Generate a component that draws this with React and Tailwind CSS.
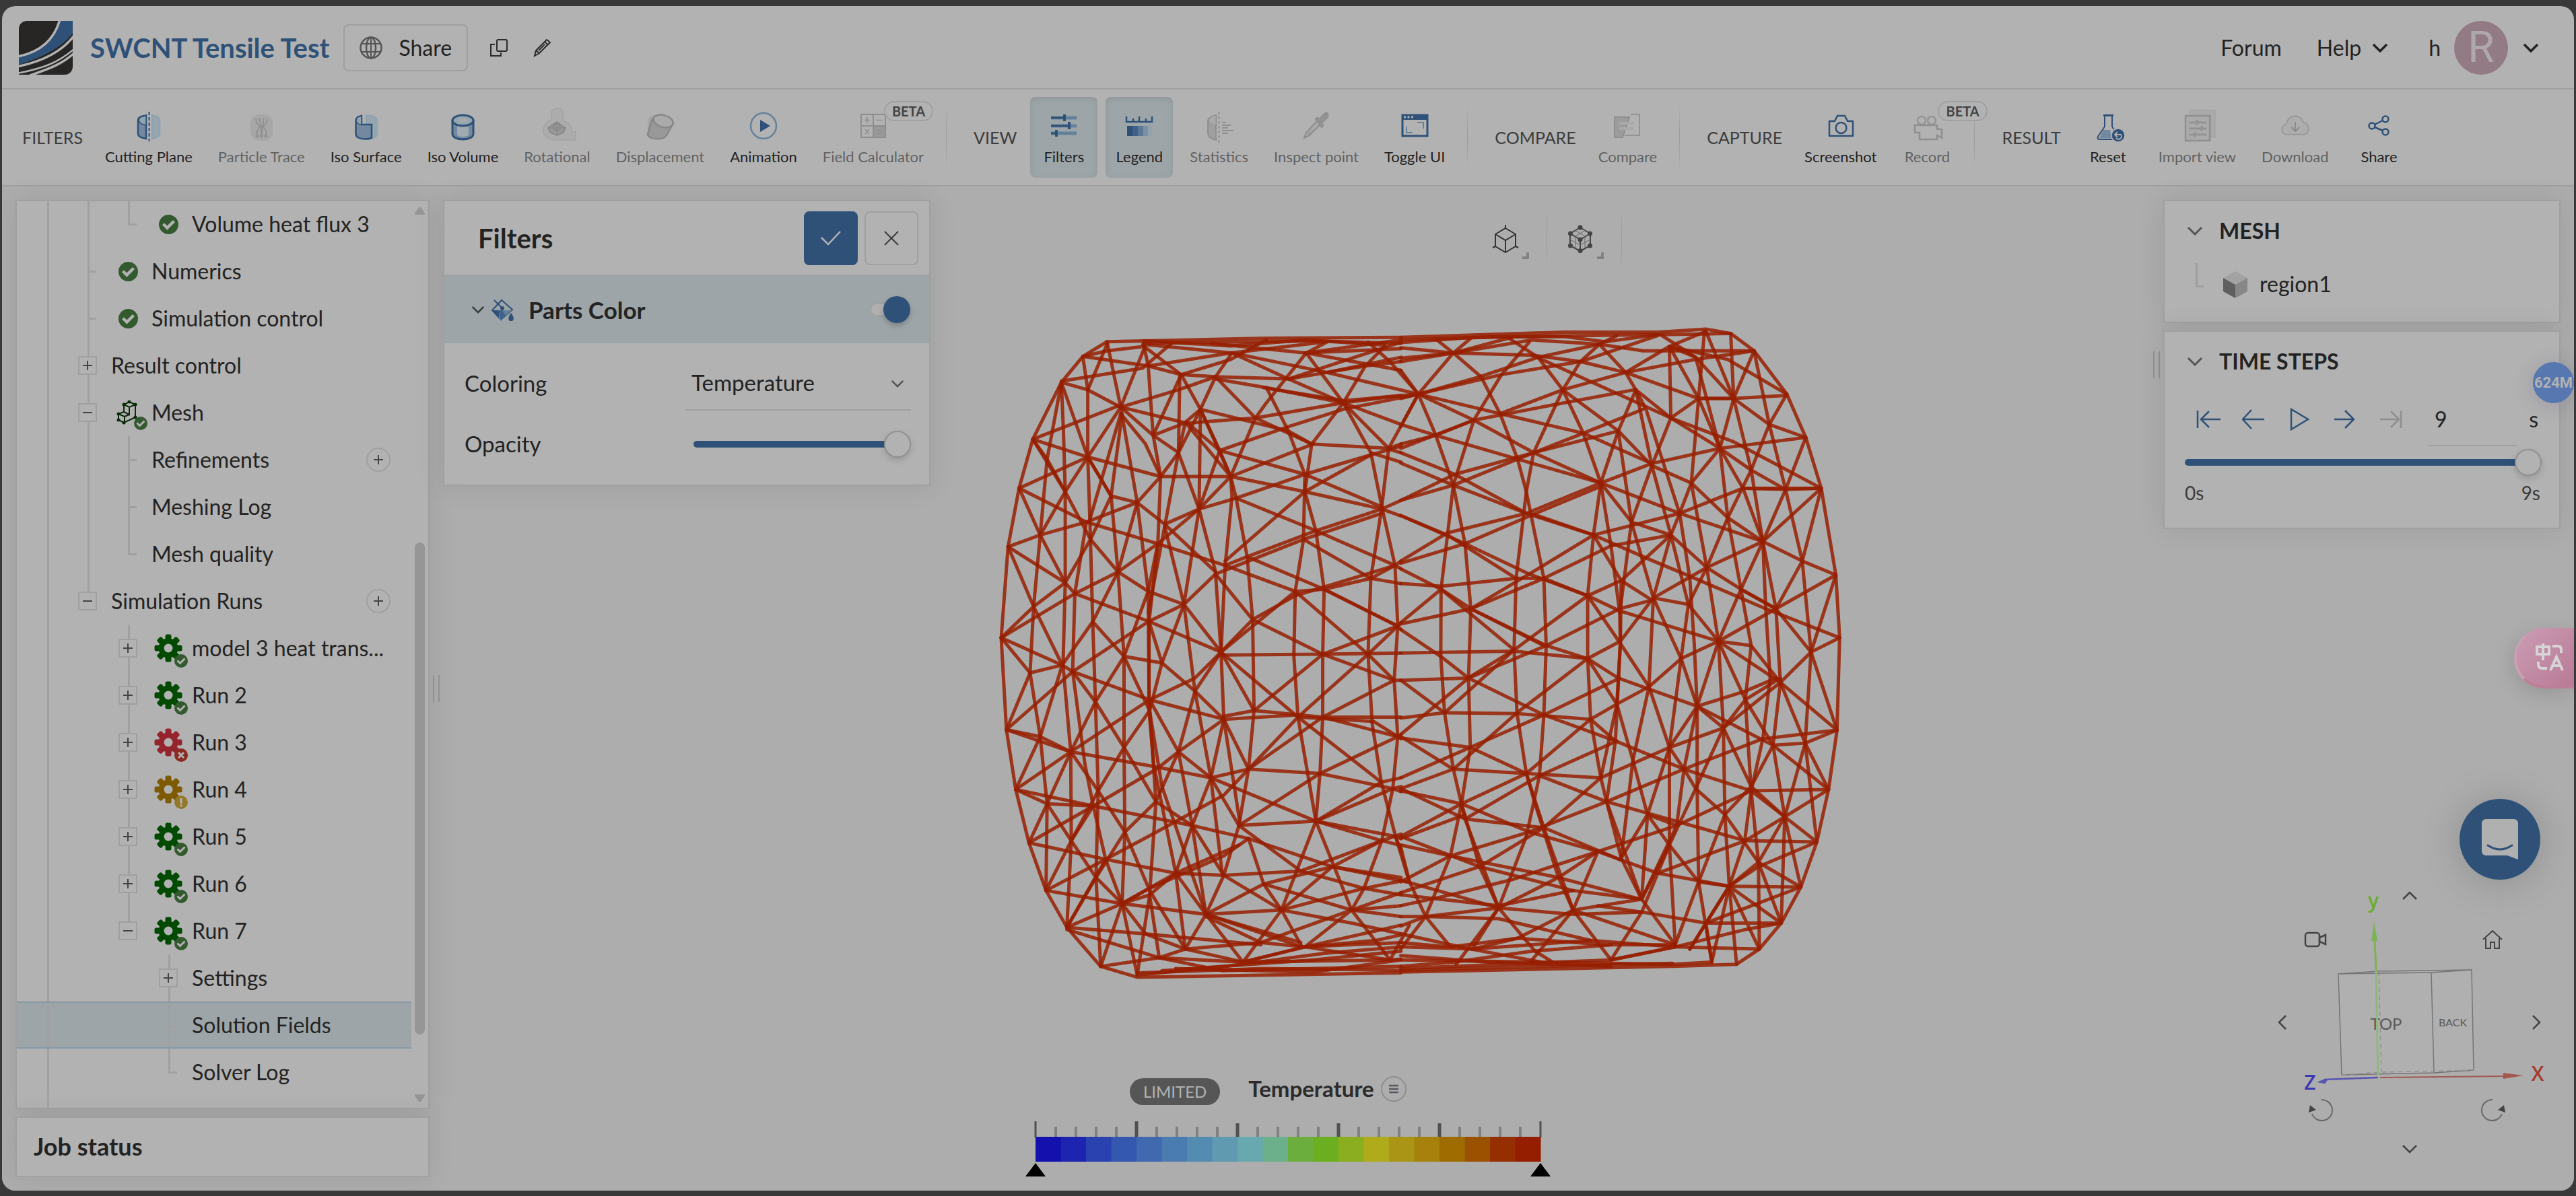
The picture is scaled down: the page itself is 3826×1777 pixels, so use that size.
import React from "react";

/* ---------- Result mesh ---------- */

const MESH_LEFT = [
  "1520,64 1030,66 585,72 450,74 362,108 284,168 180,299 130,412 90,547 65,757 84,969 118,1107 166,1230 228,1340 304,1425 427,1515 560,1540 1520,1530",
  "284,168 292,290 298,420 298,630 290,820 318,1020 320,1225 304,1425",
  "284,168 232,345 207,520 183,685 170,838 207,985 232,1140 228,1340",
  "362,108 380,185 380,340 388,490 398,720 408,905 418,1110 410,1310 427,1515",
  "450,74 500,225 560,445 600,650 603,900 628,1135 605,1350 560,1535",
  "505,240 465,430 490,605 512,800 512,1010 515,1205 505,1370 427,1515",
  "500,240 385,490", "450,80 380,185",
  "585,85 600,130 618,290 645,385 635,540 603,720 603,925 620,1050 700,1300 735,1475",
  "375,490 333,655 325,835 370,1050 400,1145 445,1268 505,1370 560,1535",
  "715,150 710,330 660,500 600,700", "660,500 730,680",
  "790,230 785,460 730,680 770,880 828,1080 870,1305",
  "900,385 905,430 880,590 865,790 875,945 912,1095 935,1190",
  "860,325 900,385 920,435 960,570 980,715 985,925 965,1060 930,1190 875,1305 810,1395 735,1475",
  "845,610 865,790", "710,330 785,460 845,605",
  "1030,180 1110,280 1170,380 1165,530 1135,650 1130,800 1145,940 1210,1180 1340,1385",
  "1195,310 1170,420 1210,510 1240,645 1235,795 1235,940 1225,1070 1210,1180 1085,1385 945,1505",
  "1310,215 1410,330 1450,455 1498,590 1508,730 1495,855 1508,985 1490,1105 1450,1225 1385,1335 1340,1385",
  "1583,195 1475,320 1450,455 1410,620 1400,795 1415,955 1448,1090 1500,1215 1550,1320",
  "362,108 450,95 585,85", "362,108 600,130 720,150 845,155 1110,160 1250,145 1390,130 1520,120",
  "284,165 580,135 690,75", "585,85 720,150 790,230 860,325", "600,130 900,100 1240,75",
  "585,90 500,225 380,340 298,420 207,520", "284,168 380,185 500,225 618,290 740,260 860,325",
  "500,225 710,185 845,155 990,250 1195,310 1475,320 1520,310", "500,225 740,262 990,250 1310,215",
  "720,150 900,115 1030,70", "905,100 845,155 790,230 710,330 645,385 560,445 375,490 207,520 90,547",
  "905,100 1110,160 1310,215", "580,80 905,100 1250,145 1520,110", "830,78 1175,100 1520,140",
  "1250,75 1175,100 1030,215 990,250 900,385", "1175,100 1310,215 1195,310", "1170,100 1520,70", "1170,100 1520,90",
  "1460,85 1390,130 1310,215 1475,320", "1020,180 1310,210 1583,195", "1110,160 1520,75", "1400,75 1480,120 1583,195",
  "1250,145 1583,195", "845,160 1030,180 1310,215 1520,198", "1583,195 1310,230 1110,270 860,325",
  "1310,215 1520,265", "1410,330 1520,352", "1475,322 1520,330", "585,78 1200,72 1520,78", "585,72 900,84 1175,70 1460,82",
  "1498,590 1520,598", "1508,730 1520,738", "1508,985 1520,990", "1490,1105 1520,1112", "1450,1225 1520,1236", "1500,1215 1520,1250",
  "1270,1285 1540,1320", "1340,1385 1520,1375", "1170,1470 1430,1455 1520,1442", "1170,1470 1520,1460", "1480,1500 1520,1498", "560,1530 1020,1520 1520,1524", "700,1520 1200,1528 1520,1500",
  "790,230 1110,280 1195,310", "860,325 1170,380 1450,455", "900,385 1200,310", "645,385 900,385",
  "900,385 1170,420 1450,460 1520,476", "785,460 920,435 1170,380 1410,335 1520,315", "920,435 1210,510 1498,590",
  "880,590 960,570 1210,510 1450,460 1520,440", "880,580 1170,420 1410,335", "960,570 1240,645 1508,730",
  "845,610 1165,530 1450,470", "880,590 1135,650 1240,645 1410,620 1498,590 1520,580", "1165,530 1410,620 1520,632",
  "865,790 980,715 1135,660 1240,640 1498,590", "865,790 1135,650 1400,795 1495,855",
  "845,610 980,715 1235,795 1495,855 1520,855", "865,797 1235,795 1520,792", "1235,795 1508,730 1240,645",
  "985,925 1235,795", "1520,722 1508,730 1400,795 1145,940 965,1060", "865,790 985,925", "865,790 1145,940 1448,1090",
  "875,945 1145,935", "875,938 985,925 1235,940 1520,940", "1235,940 1495,855", "1145,940 1420,950 1508,985",
  "1235,940 1508,985 1520,980", "965,1060 1235,940", "965,1060 1225,1070 1490,1105", "1225,1070 1508,985",
  "828,1080 965,1060", "828,1080 1210,1180", "710,1020 828,1080 930,1190 1210,1180 1450,1225",
  "930,1190 1225,1070", "1210,1180 1448,1090 1520,1080", "1210,1180 1490,1105 1520,1100",
  "930,1190 1155,1295 1385,1335 1520,1350", "965,1220 1270,1285 1520,1310", "875,1305 1155,1295 1450,1225 1520,1210",
  "875,1305 1085,1385 1270,1285", "1210,1180 1500,1215 1520,1220", "810,1395 1020,1325 1270,1285 1450,1225",
  "810,1395 1085,1385 1385,1335 1520,1318", "965,1220 1020,1325 1085,1385 1160,1470", "1340,1385 1520,1345",
  "1020,1325 1340,1385 1520,1400", "1085,1385 1340,1415 1520,1440", "810,1400 1010,1460 1170,1470 1520,1420",
  "810,1395 1160,1470", "810,1395 945,1505", "735,1475 1010,1460 1340,1385 1170,1470 945,1505",
  "1340,1385 1480,1500 1550,1420", "735,1475 945,1505 1170,1470 1480,1500", "640,1495 870,1525 1520,1515",
  "560,1535 880,1515 1240,1485 1520,1470", "650,1525 1200,1500 1520,1480", "427,1515 640,1495 735,1475",
  "590,1440 735,1475", "304,1425 590,1440 1010,1465", "304,1430 640,1495 945,1505 1480,1500", "605,1350 640,1495",
  "304,1425 505,1370 605,1335 875,1260 965,1220", "228,1340 505,1370 810,1395 1155,1460", "166,1230 445,1268 700,1300 875,1305",
  "118,1107 400,1145 760,1190 965,1220", "84,969 318,1020 630,1055 828,1080", "325,835 605,900 875,945",
  "333,655 605,720 865,790", "375,490 635,540 880,590", "130,412 375,490", "180,299 380,340 645,385",
  "180,299 500,220", "130,412 380,340", "180,299 298,420 390,530", "284,168 380,340 465,430", "130,412 207,520 298,630 333,655",
  "90,547 298,630", "90,547 183,685 287,820 325,835", "65,757 183,685 298,630 390,530 465,430", "65,757 287,820",
  "65,757 170,838 287,820", "84,969 170,838", "84,969 207,985 318,1020", "118,1107 207,985 287,820", "118,1107 232,1140 400,1145",
  "166,1230 232,1140 318,1020", "228,1340 320,1225 400,1145", "232,1140 320,1225 410,1310 505,1370 590,1440",
  "304,1425 410,1310", "228,1340 445,1268 630,1205 875,1120 965,1060", "505,1370 700,1300 930,1235",
  "166,1230 400,1145 630,1060 710,1020 875,945", "118,1107 318,1020 605,900 770,850 865,790", "84,969 325,835 600,720 730,680 845,610",
  "65,757 333,655 490,605 635,540 785,460", "287,820 398,720 490,605 560,445", "318,1020 408,905 512,800 600,650 635,540",
  "325,835 408,905 512,1010 628,1135 760,1190 875,1305", "318,1020 418,1110 515,1205 605,1340 735,1475", "320,1225 418,1110 512,1010 605,925 650,815 730,680",
  "410,1310 515,1205 628,1135 710,1020 770,880 865,790", "304,1425 445,1268", "505,1370 605,1350 700,1300 760,1190 828,1080 875,945 965,1060",
  "605,900 710,1020 760,1190 810,1395 700,1300", "603,720 650,815 770,880 875,945", "398,720 512,800 650,815",
  "390,530 490,605 600,650 730,680 865,790", "380,340 465,430 560,445 660,495 845,605", "512,800 605,925 650,1100 810,1395",
  "618,290 710,330 735,260 790,230 900,385", "500,240 590,310 645,385", "720,150 618,290", "860,325 785,460 660,495", "900,385 785,460",
  "180,299 232,345 298,420", "735,260 900,385",
];

const MESH_RIGHT = [
  "0,64 560,52 880,52 1045,45 1130,55 1210,95 1322,195 1387,295 1440,412 1490,612 1503,757 1494,970 1465,1107 1425,1228 1370,1332 1303,1415 1228,1475 1150,1510 930,1515 0,1528",
  "0,70 380,62 880,58 1130,55", "0,76 250,64 560,62 700,74 880,58", "0,88 180,100 450,105 615,120 770,145", "0,120 180,100 450,70 680,80 830,95 1210,95",
  "0,112 180,100 380,64", "0,140 60,195 180,100 240,66", "0,205 60,195 270,155 470,110 680,80", "60,195 345,150 615,120 880,60",
  "60,195 340,240 555,185 770,145 1010,115 1210,95", "120,68 180,100 275,155 340,240 400,345 430,420 490,620 498,775 490,935 475,1075 430,1215",
  "440,75 345,150 250,255 180,405 160,520 138,645 137,800 150,930 180,1060 220,1175 335,1380",
  "370,66 470,110 555,185 625,285 685,400 660,520 640,660 640,800 650,945 685,1080 705,1135 755,1265 825,1360",
  "685,400 720,545 750,700 752,770 740,910 685,1080", "740,60 680,80 615,120 555,185 455,330 430,420 395,620 388,785 398,930 430,1070 490,1195 590,1385",
  "0,270 60,195 120,290 180,405 220,540 240,690 232,850 238,1010 208,1140 170,1260 85,1400", "430,1215 335,1380 245,1475",
  "0,265 120,290 400,345 685,400", "0,310 120,290 250,255 520,220 800,185", "0,320 250,255", "60,195 250,255 455,330 685,400",
  "0,330 185,380 430,470", "0,354 180,405 430,470 660,520", "0,440 185,380 455,330 745,280", "0,440 180,405 400,345 625,285 830,230",
  "0,475 160,520 395,620", "0,475 220,540 440,610 640,660", "0,580 160,515 430,470 685,400", "0,585 220,540 455,472 685,408",
  "0,598 138,645 240,690 490,775", "0,632 138,638 395,620 490,620 640,660", "240,690 440,610 660,520 455,472",
  "490,620 720,545 925,520", "0,722 138,645 388,785 640,660", "0,725 240,690 490,620", "0,738 137,800 232,850 490,935",
  "0,792 388,788 640,805", "0,855 230,850 388,785", "0,855 150,930", "240,690 498,775 640,805", "0,942 150,930 388,785", "0,980 232,850 498,775 750,690 860,670",
  "150,930 398,932 650,945", "0,988 238,1010 430,1070 685,1080", "0,985 180,1060 430,1070", "0,1080 238,1010 490,935 750,850",
  "0,1105 180,1060 398,930 640,805", "0,1110 208,1140 440,1205 675,1250", "0,1105 220,1175 490,1195 755,1270",
  "208,1140 430,1070 650,945", "220,1175 475,1075 740,995", "490,935 735,995", "475,1075 705,1135", "490,1195 685,1080",
  "440,1205 705,1135 970,1060 1240,990 1494,970", "0,1215 208,1140", "0,1220 220,1165", "0,1235 170,1260 540,1310 820,1360",
  "0,1215 270,1285 590,1340 825,1360", "0,1240 30,1320 85,1400 170,1470", "0,1320 170,1260 440,1205", "0,1345 270,1285 490,1195",
  "0,1375 170,1350 380,1315 675,1250", "0,1316 335,1380 590,1395 820,1390", "0,1350 335,1375 590,1340", "208,1140 270,1285 335,1380",
  "430,1070 460,1140 540,1310 590,1385", "245,1475 400,1450 590,1385", "0,1400 85,1400 335,1405 650,1455 940,1470",
  "0,1422 85,1400 335,1380 540,1310 675,1250", "0,1475 85,1400", "0,1440 240,1475 480,1505", "0,1460 170,1470 400,1450 700,1465 940,1465",
  "0,1515 180,1505 450,1480 720,1465", "0,1520 720,1500 940,1470", "450,1500 590,1385 825,1360", "590,1385 720,1500",
  "590,1385 940,1465", "335,1380 460,1480 520,1505", "335,1380 190,1510", "720,1500 825,1390 675,1375", "0,1500 480,1505 930,1510 1065,1505",
  "0,1490 300,1505 720,1515", "0,1524 400,1516 930,1508", "0,1470 245,1475 650,1455", "675,1250 590,1385",
  "920,85 925,250 860,360 790,490 750,700", "920,85 1020,205 1093,320 1172,412 1240,535", "805,185 925,250 1093,320",
  "805,185 860,360 925,520 985,680 1088,765", "805,185 840,230 955,470 990,620 1005,770 1015,915", "745,280 790,490 865,665 960,805 1015,915",
  "745,280 860,360 995,400 1120,480 1240,535", "685,400 745,280 805,185", "685,400 860,355 1093,320 1387,295", "685,400 955,470 1240,535",
  "685,400 790,490 925,520 1048,595 1165,645 1285,690", "660,520 955,470 1172,412 1440,412", "660,520 755,625 860,670",
  "660,520 865,580 990,615 1250,690 1503,757", "640,660 755,625 925,520", "640,660 750,695 1088,765 1300,860",
  "640,660 752,770 850,870 920,1010", "640,805 752,765 865,665 1048,595 1240,535 1440,412",
  "865,665 985,680 1048,595 1120,480 1200,370 1262,265 1322,195", "865,665 925,520 955,470 995,400 1020,205 1040,50",
  "640,805 745,850 1015,915 1275,1005", "640,805 740,910 795,1040 845,1165 945,1190", "740,910 850,870 960,805 1088,765 1285,690 1490,612",
  "865,665 850,870 795,1040 755,1265", "755,625 752,770 735,995 705,1135", "650,945 740,910", "650,945 735,995 970,1060 1200,1110",
  "685,1080 920,1010 1105,965 1300,860 1405,790 1503,757", "755,1265 845,1165 920,1010 960,805 985,680",
  "675,1250 945,1190 1200,1110 1465,1107", "675,1250 880,1300 1125,1330 1370,1332", "825,1360 920,1235 1010,1105 1105,965 1180,900 1300,850",
  "825,1360 945,1190 970,1060 1015,915 1088,765 1165,645 1240,535 1318,415 1387,295", "705,1135 825,1360 940,1465",
  "825,1360 845,1165 920,1235 1020,1320", "825,1390 920,1235", "705,1135 1180,1225 1425,1228",
  "940,1465 1020,1320 1110,1165 1200,1100 1275,1005", "940,1465 920,1235 920,1010 1015,915", "1015,915 1015,1105 1020,1320 1065,1505",
  "920,1010 970,1060 1010,1105 1110,1165 1225,1275 1303,1415", "1088,765 1105,965 1110,1165 1125,1330 1150,1510",
  "1088,765 1180,900 1275,1005 1465,1107", "1015,915 1105,965 1200,1100 1315,1170 1370,1332", "995,400 1048,595 1088,765",
  "1093,320 1120,480 1165,645 1200,775 1180,900 1200,1110 1225,1275 1228,1475", "1088,765 1200,775 1300,860 1494,970",
  "1240,535 1250,690 1265,850 1240,990 1200,1110 1178,1225 1125,1330", "1240,535 1285,690 1300,860 1275,1005 1315,1170 1303,1415",
  "1285,690 1405,790 1494,970", "1285,690 1375,580 1440,412", "1240,535 1375,580 1490,612", "1015,915 1180,880 1285,850",
  "1210,95 1262,265 1318,415 1375,580 1405,790 1385,1000 1425,1228", "1300,860 1385,1000 1465,1107", "1275,1005 1385,1000 1494,970",
  "1385,1000 1315,1170 1225,1275 1125,1330 1045,1415", "1465,1107 1315,1170 1180,1225 880,1300", "1425,1228 1225,1285 1125,1330",
  "1425,1228 1315,1170 1200,1110", "1370,1332 1225,1275", "1370,1332 1045,1415 990,1475", "1228,1475 1125,1330 1303,1415 1045,1415 830,1390",
  "1303,1415 1180,1430 940,1470", "1228,1475 940,1470", "1065,1505 1125,1330 990,1475", "1020,1320 1125,1330",
  "1130,55 1140,205 1200,370 1240,535", "1045,50 1140,205 1210,95", "1020,205 1140,205 1322,198", "1140,205 1262,265 1387,295",
  "925,250 1020,205 1140,205", "920,85 1120,115 1322,195", "925,250 1140,305 1440,412", "1172,412 1318,415 1440,412",
  "1093,320 1200,370 1318,415", "1140,205 1093,320 995,400", "680,80 770,145 1020,205", "770,145 805,185", "555,185 745,280",
  "340,240 625,285 860,355", "920,85 1045,50", "770,145 920,85 1010,110 1140,205", "1165,645 1285,690", "1490,612 1405,790",
  "450,105 925,250", "940,1470 720,1500", "1045,1415 1065,1505", "890,58 1010,110 1093,320",
];

function Mesh() {
  return (
    <svg viewBox="0 0 3819 1492" className="absolute inset-0 h-full w-full" aria-label="Result mesh" role="img">
      <g fill="none" stroke="#971f00" strokeWidth="5" strokeOpacity="0.85" strokeLinejoin="round" strokeLinecap="round">
        <g transform="translate(1457 183) scale(0.40816 0.64413)">
          {MESH_LEFT.map((p, i) => (
            <polyline key={i} points={p} vectorEffect="non-scaling-stroke" />
          ))}
        </g>
        <g transform="translate(2077 183) scale(0.43367 0.64413)">
          {MESH_RIGHT.map((p, i) => (
            <polyline key={i} points={p} vectorEffect="non-scaling-stroke" />
          ))}
        </g>
      </g>
    </svg>
  );
}

/* ---------- Icons ---------- */

const B = "#2f5178";
const M = "#64819b";
const L = "#92a4ae";

function Icon({ children, size = "size-12", box = "0 0 48 48" }) {
  return (
    <svg viewBox={box} className={`${size} shrink-0 overflow-visible`} fill="none" aria-hidden="true">
      {children}
    </svg>
  );
}

function Chevron({ className = "", w = 2 }) {
  return (
    <svg viewBox="0 0 24 14" className={`shrink-0 ${className}`} fill="none" stroke="currentColor" strokeWidth={w} aria-hidden="true">
      <path d="M2 2l10 10L22 2" />
    </svg>
  );
}

const ICONS = {
  cut: (
    <Icon>
      <path d="M20 8.500Q8 10 8 15v21q0 5 12 7z" fill="#7289a0" stroke={B} strokeWidth="2.500" />
      <path d="M20 23Q9 21 9 15q1-5 11-6z" fill="#92a4ae" stroke={B} strokeWidth="1.500" />
      <path d="M29 8.500Q40 10 40 15v21q0 5-11 7z" fill="#96a6b0" stroke="#8fa3b1" strokeWidth="2.500" />
      <path d="M24.500 3v44" stroke={B} strokeWidth="2" strokeDasharray="5 3" />
    </Icon>
  ),
  trace: (
    <Icon>
      <rect x="8" y="7" width="33" height="39" rx="13" fill="#a7a7a7" />
      <path d="M16 13q0 8 7 12-7 5-5 14M33 13q0 8-7 12 7 5 5 14M21 12q1 8 3 10v18M28 12q-1 8-2 12l-2 16" stroke="#8d8d8d" strokeWidth="1.500" />
      <g fill="#939393"><circle cx="18" cy="39" r="2.500" /><circle cx="24.500" cy="39" r="2.500" /><circle cx="31" cy="39" r="2.500" /></g>
    </Icon>
  ),
  isoSurface: (
    <Icon>
      <path d="M24 8c9 0 16 3 16 8v20c0 5-7 8-16 8z" fill="#96a6b0" stroke="#8fa3b1" strokeWidth="2" />
      <path d="M8.500 16v20c0 5 6 7.500 14 7.500 4 0 7-.5 9.500-1.500V22H17V9c-5 1-8.500 3-8.500 7z" fill="#7289a0" stroke={B} strokeWidth="2.500" />
      <path d="M9 16c0 4 4 6 8 6V9c-5 1-8 3-8 7z" fill={L} stroke={B} strokeWidth="1.500" />
    </Icon>
  ),
  isoVolume: (
    <Icon>
      <path d="M9 16v20c0 5 7 8 15.500 8S40 41 40 36V16z" fill="#7289a0" stroke={B} strokeWidth="3" />
      <path d="M16 22v14c0 3 3 4 8.500 4s8.500-1 8.500-4V22z" fill="#a0aab0" />
      <ellipse cx="24.500" cy="16" rx="15.500" ry="8" fill={L} stroke={B} strokeWidth="3" />
      <ellipse cx="24.500" cy="16" rx="8" ry="4" fill="#a3aaaf" />
    </Icon>
  ),
  rotational: (
    <Icon>
      <path d="M16 4c0-8 17-8 17 0v12c9 3 13 9 13 17h6v12H24C7 45 1 34 5 25c2-5 6-8 11-9z" fill="#acacac" stroke="#a3a3a3" strokeWidth="1.500" />
      <path d="M24 18l13 9-3 7-10 4-10-4-3-7z" fill="#989898" stroke="#858585" strokeWidth="1.500" />
      <circle cx="24" cy="26" r="5" stroke="#858585" strokeWidth="1.500" /><path d="M24 18v20M12 27h24" stroke="#858585" />
    </Icon>
  ),
  displacement: (
    <Icon>
      <rect x="6" y="8" width="24" height="36" rx="10" fill="#a5a5a5" />
      <path d="M13 14L6 36c0 9 24 10 28 2l10-18z" fill="#999" stroke="#878787" strokeWidth="2.500" />
      <ellipse cx="29" cy="17" rx="15" ry="9" transform="rotate(16 29 17)" fill="#aaa" stroke="#878787" strokeWidth="2.500" />
    </Icon>
  ),
  play: (
    <Icon><circle cx="24" cy="24" r="19" stroke={M} strokeWidth="2.500" /><path d="M19 15l15 9-15 9z" fill={B} /></Icon>
  ),
  calc: (
    <Icon>
      <path d="M24 24h18v17H24z" fill="#999" />
      <path d="M6 7h36v34H6zM24 7v34M6 24h36" stroke="#8e8e8e" strokeWidth="2" />
      <path d="M11 15.500h8M15 11v9M29 15.500h8M12 29l6 7M18 29l-6 7M29 30.500h8M29 35h8" stroke="#8e8e8e" strokeWidth="1.500" />
    </Icon>
  ),
  filters: (
    <Icon>
      <path d="M5 12h38M5 24h38M5 35h38" stroke="#64819b" strokeWidth="5" />
      <path d="M5 12h20M5 24h28M5 35h9" stroke={B} strokeWidth="3" /><path d="M25 7v10M32 18v11M13 30v10" stroke={B} strokeWidth="4" />
    </Icon>
  ),
  legend: (
    <Icon>
      <path d="M5 10v8h38v-8M15 13v5M24 10v8M34 13v5" stroke={B} strokeWidth="2.500" />
      <path d="M6 24h8v15H6z" fill={B} /><path d="M14 24h8v15h-8z" fill="#40618a" /><path d="M22 24h8v15h-8z" fill="#5b7896" /><path d="M30 24h7v15h-7z" fill="#7990a3" /><path d="M37 24h6v15h-6z" fill="#92a2ab" />
    </Icon>
  ),
  stats: (
    <Icon>
      <path d="M19 8Q7 11 7 17v18q0 7 12 10z" fill="#9f9f9f" stroke="#8f8f8f" strokeWidth="2" /><path d="M19 23Q9 22 8 15q4-6 11-7z" fill="#aaa" stroke="#8f8f8f" />
      <path d="M23.500 3v46" stroke="#808080" strokeWidth="1.500" strokeDasharray="4 3" /><path d="M28 19h6M28 23h13M28 27h9M28 31h17M28 35h9" stroke="#8f8f8f" strokeWidth="2" />
    </Icon>
  ),
  pick: (
    <Icon>
      <path d="M26 16L9 34l-3 8 8-4 17-17z" fill="#aaa" stroke="#8c8c8c" strokeWidth="2" /><path d="M11 35l8-5-7 9z" fill="#999" />
      <path d="M22 14l3-3 4 2 6-7c5-4 9 0 6 6l-8 8 2 4-3 3z" fill="#939393" stroke="#888" />
    </Icon>
  ),
  toggle: (
    <Icon>
      <path d="M6 8h37v31H6z" stroke={B} strokeWidth="3" /><path d="M5 7h39v8H5z" fill={B} /><g fill="#b2b2b2"><circle cx="9.500" cy="11" r="1.700" /><circle cx="15" cy="11" r="1.700" /><circle cx="20.500" cy="11" r="1.700" /></g>
      <path d="M28 19h9v9M12 25v9h9" stroke={M} strokeWidth="2" />
    </Icon>
  ),
  compare: (
    <Icon>
      <path d="M5 11h22l-10 30H5z" fill="#9c9c9c" stroke="#8f8f8f" strokeWidth="2" /><path d="M29 7h13v31H20" stroke="#939393" strokeWidth="2" />
      <path d="M12 20h22M12 28h22" stroke="#a9a9a9" strokeWidth="4" />
    </Icon>
  ),
  camera: (
    <Icon><path d="M7 17h8l4-8h11l4 8h8v22H7z" stroke={B} strokeWidth="2.500" strokeLinejoin="round" /><circle cx="24.500" cy="27" r="8" stroke={B} strokeWidth="2.500" /></Icon>
  ),
  record: (
    <Icon>
      <circle cx="16" cy="16" r="6" stroke="#959595" strokeWidth="2.500" /><circle cx="31" cy="16" r="6" stroke="#959595" strokeWidth="2.500" />
      <path d="M6 23h33v6h7v13l-7-4v6H13V34H6z" stroke="#8f8f8f" strokeWidth="2.500" />
    </Icon>
  ),
  reset: (
    <Icon>
      <path d="M19 9v16L9 40c-1 3 0 4 2 4h26c2 0 3-1 2-4L30 25V9" stroke={B} strokeWidth="2" /><path d="M17 30L11 42h18l-2-12z" fill="#7289a0" /><path d="M17 8.500h15" stroke={B} strokeWidth="3" />
      <circle cx="39" cy="38" r="10" fill={B} stroke="#b2b2b2" strokeWidth="1.500" /><path d="M35 37h8a4 4 0 0 1-7 5M38 33l-4 4 4 4" stroke="#b2b2b2" strokeWidth="1.800" />
    </Icon>
  ),
  importView: (
    <Icon>
      <path d="M13 1h38v40h-6V9H13z" fill="#aaa" stroke="#a3a3a3" strokeWidth="1.500" /><path d="M7 9h36v37H7z" fill="#aaa" stroke="#8f8f8f" strokeWidth="2.500" />
      <path d="M12 19h26M12 28h26M12 37h26M24 15v8M31 24v8M21 33v8" stroke="#939393" strokeWidth="3" />
    </Icon>
  ),
  cloud: (
    <Icon>
      <path d="M13 37c-11 0-12-14-2-15 1-16 22-16 25-3 10 0 11 18 0 18z" fill="#adadad" stroke="#999" strokeWidth="2" /><path d="M24 18v13M18 26l6 6 6-6" stroke="#8a8a8a" strokeWidth="2" />
    </Icon>
  ),
  share: (
    <Icon><g stroke={B} strokeWidth="2.500"><circle cx="34" cy="14" r="4.500" /><circle cx="14" cy="24" r="4.500" /><circle cx="34" cy="33" r="4.500" /><path d="M18 22l12-6M18 26l12 5" /></g></Icon>
  ),
};

/* ---------- Header ---------- */

function Header() {
  return (
    <header className="flex h-[124px] shrink-0 items-center border-b-2 border-[#a0a0a0] pt-px pr-[51px] pl-[25px]">
      <svg viewBox="0 0 80 80" className="size-20 shrink-0" role="img" aria-label="SimScale">
        <defs><clipPath id="logo"><path d="M12 0h68v68a12 12 0 0 1-12 12H0V12A12 12 0 0 1 12 0z" /></clipPath></defs>
        <g clipPath="url(#logo)">
          <rect width="80" height="80" fill="#272624" />
          <path d="M61-2C52 30 30 47-2 54v12C34 54 62 42 82 16V-2z" fill={B} />
          <g fill="none" stroke="#b2b2b2" strokeWidth="3.500">
            <path d="M61-2C52 30 30 47-2 53" />
            <path d="M82 22C64 46 36 60-2 68" />
            <path d="M82 48C62 66 42 72 14 82" />
            <path d="M82 42C58 62 38 70-2 78" strokeWidth="2.500" />
          </g>
        </g>
      </svg>
      <h1 className="ml-[26px] text-[40px] leading-[48px] font-bold text-[#2f5178]">SWCNT Tensile Test</h1>
      <button className="ml-[21px] flex h-[70px] items-center gap-6 rounded-lg border-2 border-[#a0a0a0] px-[22px] text-[32px]">
        <svg viewBox="0 0 34 34" className="size-[34px]" fill="none" stroke="#555" strokeWidth="2.500" aria-hidden="true"><circle cx="17" cy="17" r="15.500" /><ellipse cx="17" cy="17" rx="7" ry="15.500" /><path d="M3 11h28M3 23h28M17 2v30" strokeWidth="2" /></svg>
        Share
      </button>
      <button aria-label="Duplicate" className="ml-8">
        <svg viewBox="0 0 28 28" className="size-7" fill="none" stroke="#2b2b2b" strokeWidth="2"><rect x="11" y="2" width="15" height="17" rx="2" /><path d="M8 9H2v17h15v-5" /></svg>
      </button>
      <button aria-label="Rename" className="ml-9">
        <svg viewBox="0 0 28 28" className="size-7" fill="none" stroke="#2b2b2b" strokeWidth="2"><path d="M3 26l2-8L21 2l5 4L10 22zM5 18l5 4M18 5l5 5M9 18l9-9" /></svg>
      </button>
      <nav className="ml-auto flex items-center text-[32px]">
        <a href="#forum">Forum</a>
        <button className="ml-[52px] flex items-center gap-4">Help <Chevron className="h-[14px] w-6" w={3.5} /></button>
        <button className="ml-[60px] flex items-center" aria-label="Account h">
          h
          <span className="ml-5 flex size-20 items-center justify-center rounded-full bg-[#937b86] font-['Roboto',sans-serif] text-[64px] leading-none text-[#aea8ac]">R</span>
          <Chevron className="ml-[21px] h-[14px] w-[26px]" w={3.5} />
        </button>
      </nav>
    </header>
  );
}

const TOOLS = [
  { label: "FILTERS", items: [["Cutting Plane", "cut", 1], ["Particle Trace", "trace"], ["Iso Surface", "isoSurface", 1], ["Iso Volume", "isoVolume", 1], ["Rotational", "rotational"], ["Displacement", "displacement"], ["Animation", "play", 1], ["Field Calculator", "calc", 0, 0, 1]] },
  { label: "VIEW", items: [["Filters", "filters", 1, 1], ["Legend", "legend", 1, 1], ["Statistics", "stats"], ["Inspect point", "pick"], ["Toggle UI", "toggle", 1]] },
  { label: "COMPARE", items: [["Compare", "compare"]] },
  { label: "CAPTURE", items: [["Screenshot", "camera", 1], ["Record", "record", 0, 0, 1]] },
  { label: "RESULT", items: [["Reset", "reset", 1], ["Import view", "importView"], ["Download", "cloud"], ["Share", "share", 1]] },
];

function Tool({ item }) {
  const [name, icon, enabled, active, beta] = item;
  return (
    <button
      disabled={!enabled}
      aria-pressed={active ? true : undefined}
      className={`relative flex h-[120px] min-w-[100px] shrink-0 flex-col items-center rounded-lg px-[13px] pt-[19px] text-[22px] leading-8 whitespace-nowrap ${active ? "bg-[#9da5a8] shadow-[inset_0_3px_8px_#8f979a]" : ""} ${enabled ? "text-[#232323]" : "text-[#626262]"}`}
    >
      {ICONS[icon]}
      <span className="mt-[6px]">{name}</span>
      {beta && (
        <span className="absolute top-[6px] left-1/2 ml-4 h-[30px] rounded-full border-2 border-[#a0a0a0] bg-[#b2b2b2] px-[10px] text-[20px] leading-[26px] font-bold text-[#444]">BETA</span>
      )}
    </button>
  );
}

function Toolbar() {
  return (
    <div className="flex h-[144px] shrink-0 items-center border-b-2 border-[#a0a0a0] pl-[30px]">
      {TOOLS.map((g, i) => (
        <section key={g.label} className="flex items-center" aria-label={g.label}>
          {i > 0 && <div className="mr-10 ml-5 h-[96px] w-px bg-linear-to-b from-transparent via-[#999] to-transparent" />}
          <h2 className="mr-5 text-[25px] leading-8 text-[#3c3c3c]">{g.label}</h2>
          <div className="flex gap-3">
            {g.items.map((t) => <Tool key={t[0]} item={t} />)}
          </div>
        </section>
      ))}
    </div>
  );
}

/* ---------- Simulation tree ---------- */

function StatusBadge({ kind, className }) {
  const fill = { ok: "#33592f", fail: "#8c2a22", warn: "#94782a" }[kind];
  return (
    <svg viewBox="0 0 20 20" className={className} fill="none" aria-hidden="true">
      <circle cx="10" cy="10" r="10" fill={fill} />
      {kind === "ok" && <path d="M4.500 9.500l4 4 7-7" stroke="#b2b2b2" strokeWidth="3" />}
      {kind === "fail" && <path d="M6 6l8 8M14 6l-8 8" stroke="#b2b2b2" strokeWidth="3" />}
      {kind === "warn" && <path d="M10 4v8M10 13.500v3" stroke="#b2b2b2" strokeWidth="3" />}
    </svg>
  );
}

function Gear({ kind }) {
  const fill = { ok: "#024a02", fail: "#95242c", warn: "#7e5a02" }[kind];
  return (
    <span className="relative block size-[42px]">
      <svg viewBox="-21 -21 42 42" className="size-[42px]" aria-hidden="true">
        {[0, 45, 90, 135].map((a) => <rect key={a} x="-4.500" y="-20.500" width="9" height="41" rx="2.500" fill={fill} transform={`rotate(${a})`} />)}
        <circle r="10.500" fill="none" stroke={fill} strokeWidth="8" />
        <circle r="6.500" fill="#b2b2b2" />
      </svg>
      <StatusBadge kind={kind} className="absolute -right-2 -bottom-2 size-5" />
    </span>
  );
}

function MeshIcon() {
  return (
    <span className="relative block h-9 w-[42px]">
      <svg viewBox="0 0 42 36" className="h-9 w-[42px]" fill="none" stroke="#0a2a0a" strokeWidth="2" aria-hidden="true">
        <path d="M7 20l8-3V6l8-4 9 4v19l-17 8-8-4zM15 6l8 4 9-4M23 10v11l-8-4M7 20l9 4 7-3M16 24v9" />
        <g fill="#0a2a0a" stroke="none"><circle cx="7" cy="20" r="2.500" /><circle cx="15" cy="6" r="2.500" /><circle cx="23" cy="2" r="2.500" /><circle cx="32" cy="6" r="2.500" /><circle cx="32" cy="25" r="2.500" /><circle cx="15" cy="33" r="2.500" /><circle cx="7" cy="29" r="2.500" /></g>
      </svg>
      <StatusBadge kind="ok" className="absolute -right-2 -bottom-2 size-5" />
    </span>
  );
}

/* v = line, t = line with a branch, l = last branch, + / m = toggle box on a line,
   e = toggle box closing a line, . = empty; other codes are icons */
const ROWS = [
  ["v v l ok", "Volume heat flux 3"],
  ["v t ok", "Numerics"],
  ["v t ok", "Simulation control"],
  ["v +", "Result control"],
  ["v m mesh", "Mesh"],
  ["v v t", "Refinements", 1],
  ["v v t", "Meshing Log"],
  ["v v l", "Mesh quality"],
  ["v e", "Simulation Runs", 1],
  ["v . + gok", "model 3 heat trans..."],
  ["v . + gok", "Run 2"],
  ["v . + gfail", "Run 3"],
  ["v . + gwarn", "Run 4"],
  ["v . + gok", "Run 5"],
  ["v . + gok", "Run 6"],
  ["v . e gok", "Run 7"],
  ["v . . +", "Settings"],
  ["v . . t", "Solution Fields", 0, 1],
  ["v . . l", "Solver Log"],
  ["v", ""],
];

function Cell({ code }) {
  const box = code === "+" || code === "m" || code === "e";
  const full = code === "v" || code === "t" || code === "+" || code === "m";
  const half = code === "l" || code === "e";
  return (
    <span className="relative flex h-full w-[60px] shrink-0 items-center justify-center">
      {(full || half) && <span className={`absolute top-0 left-[30px] w-[3px] bg-[#a0a0a0] ${full ? "h-full" : "h-[37px]"}`} />}
      {(code === "t" || code === "l") && <span className="absolute top-[34px] left-[31px] h-[3px] w-[12px] bg-[#a0a0a0]" />}
      {box && (
        <button aria-label={code === "+" ? "Expand" : "Collapse"} className="relative flex size-7 items-center justify-center border-2 border-[#a0a0a0] bg-[#b2b2b2]">
          <svg viewBox="0 0 14 14" className="size-[14px]" stroke="#444" strokeWidth="2" aria-hidden="true"><path d={code === "+" ? "M0 7h14M7 0v14" : "M0 7h14"} /></svg>
        </button>
      )}
      {code === "ok" && <StatusBadge kind="ok" className="size-[29px]" />}
      {code === "mesh" && <MeshIcon />}
      {code[0] === "g" && <Gear kind={code.slice(1)} />}
    </span>
  );
}

function Tree() {
  return (
    <section className="flex min-h-0 flex-1 overflow-hidden border-2 border-[#a0a0a0] bg-[#b2b2b2] shadow-[0_0_40px_rgba(0,0,0,0.09)]">
      <ul className="-mt-px min-w-0 flex-1">
        {ROWS.map(([cells, text, add, selected], i) => (
          <li key={i} className={`flex h-[70px] items-center pr-[31px] pl-[15px] ${selected ? "border-y-2 border-[#8799a5] bg-[#9da5a8]" : ""}`}>
            {cells.split(" ").map((c, k) => <Cell key={k} code={c} />)}
            <span className="ml-[5px] flex-1 text-[32px] leading-10 whitespace-nowrap">{text}</span>
            {add === 1 && (
              <button aria-label={`Add to ${text}`} className="flex size-[36px] items-center justify-center rounded-full border-2 border-[#a0a0a0]">
                <svg viewBox="0 0 14 14" className="size-[14px]" stroke="#444" strokeWidth="2" aria-hidden="true"><path d="M0 7h14M7 0v14" /></svg>
              </button>
            )}
          </li>
        ))}
      </ul>
      <div className="flex w-[25px] flex-col items-center py-2">
        <svg viewBox="0 0 15 12" className="h-3 w-[15px]" aria-hidden="true"><path d="M6 1h3l6 9v2H0v-2z" fill="#969696" /></svg>
        <div className="flex-[487]" />
        <div className="w-[15px] flex-[732] rounded-full bg-[#969696]" />
        <div className="flex-[89]" />
        <svg viewBox="0 0 15 12" className="h-3 w-[15px]" aria-hidden="true"><path d="M6 11h3l6-9V0H0v2z" fill="#969696" /></svg>
      </div>
    </section>
  );
}

function Handle() {
  return (
    <div className="flex w-5 shrink-0 items-center justify-center self-center">
      <div className="h-10 w-[10px] border-x-2 border-[#919191]" />
    </div>
  );
}

/* ---------- Panels ---------- */

const CARD = "pointer-events-auto border-2 border-[#a0a0a0] bg-[#b2b2b2] shadow-[0_0_40px_rgba(0,0,0,0.09)]";
const RANGE =
  "block h-10 appearance-none bg-transparent [&::-webkit-slider-runnable-track]:h-[10px] [&::-webkit-slider-runnable-track]:rounded-full [&::-webkit-slider-runnable-track]:bg-[#2f5178] [&::-webkit-slider-thumb]:-mt-[15px] [&::-webkit-slider-thumb]:size-10 [&::-webkit-slider-thumb]:appearance-none [&::-webkit-slider-thumb]:rounded-full [&::-webkit-slider-thumb]:border-2 [&::-webkit-slider-thumb]:border-[#919191] [&::-webkit-slider-thumb]:bg-[#b2b2b2] [&::-webkit-slider-thumb]:shadow-[0_4px_10px_rgba(0,0,0,0.15)]";

function FiltersPanel() {
  return (
    <section className={`${CARD} w-[724px] shrink-0 self-start`}>
      <div className="flex h-[111px] items-center border-b-2 border-[#a0a0a0] pr-4 pl-[50px]">
        <h2 className="flex-1 text-[40px] leading-[48px] font-bold">Filters</h2>
        <button aria-label="Apply" className="flex size-20 items-center justify-center rounded-lg bg-[#2f5178]">
          <svg viewBox="0 0 30 22" className="h-[22px] w-[30px]" fill="none" stroke="#b2b2b2" strokeWidth="2.500"><path d="M1 10l10 10L29 1" /></svg>
        </button>
        <button aria-label="Close" className="ml-[10px] flex size-20 items-center justify-center rounded-lg border-2 border-[#a0a0a0]">
          <svg viewBox="0 0 22 22" className="size-[22px]" fill="none" stroke="#3c3c3c" strokeWidth="2"><path d="M1 1l20 20M21 1L1 21" /></svg>
        </button>
      </div>
      <div className="flex h-[100px] items-center bg-[#9da5a8] pr-7 pl-10">
        <Chevron className="h-[12px] w-5 text-[#3c3c3c]" w={3} />
        <svg viewBox="0 0 36 34" className="ml-[9px] h-[34px] w-9" fill="none" aria-hidden="true">
          <path d="M2 18L16 3l16 14-17 15z" stroke={B} strokeWidth="2" /><path d="M1 18h30L15 33z" fill={M} /><path d="M1 18h11v12z" fill={B} /><path d="M15 33l-4-15h6l5 8z" fill="#40618a" />
          <path d="M5 3l12 12" stroke={B} strokeWidth="2" /><circle cx="17" cy="15" r="3" fill={B} /><path d="M30 22c-6 8-4 12 0 12s6-4 0-12z" fill={B} />
        </svg>
        <label htmlFor="parts" className="ml-5 flex-1 text-[35px] leading-[48px] font-bold">Parts Color</label>
        <input id="parts" type="checkbox" role="switch" defaultChecked className="relative h-[20px] w-[60px] appearance-none rounded-full border-2 border-[#a0a0a0] bg-[#b0b0b0] after:absolute after:-top-3 after:-right-[2px] after:size-10 after:rounded-full after:bg-[#2f5178] after:shadow-[0_4px_8px_rgba(0,0,0,0.2)]" />
      </div>
      <div className="pt-5 pr-[27px] pb-5 pl-[30px] text-[33px]">
        <div className="flex h-20 items-center">
          <label htmlFor="coloring" className="w-[327px]">Coloring</label>
          <div className="relative flex-1">
            <select id="coloring" className="block h-20 w-full appearance-none border-b-2 border-[#a0a0a0] pl-[10px] text-[33px]"><option>Temperature</option></select>
            <Chevron className="pointer-events-none absolute top-[34px] right-[10px] h-[12px] w-5 text-[#555]" w={3} />
          </div>
        </div>
        <div className="mt-[10px] flex h-20 items-center">
          <label htmlFor="opacity" className="w-[340px]">Opacity</label>
          <input id="opacity" type="range" defaultValue="100" className={`${RANGE} min-w-0 flex-1`} />
        </div>
      </div>
    </section>
  );
}

function ViewButtons() {
  const corner = <span className="absolute right-[26px] bottom-[18px] size-[10px] border-r-[4px] border-b-[4px] border-[#828282]" />;
  return (
    <div className="pointer-events-auto mt-[10px] flex h-[96px]">
      <button aria-label="Projection" className="relative flex w-[110px] items-center justify-center pr-3">
        <svg viewBox="0 0 40 42" className="h-[42px] w-10" fill="none" stroke="#333" strokeWidth="2"><path d="M20 5L35 14v18L20 41 5 32V14zM5 14l15 9 15-9M20 23v18M20 5V0M5 32l-4 2M35 32l4 2" /></svg>
        {corner}
      </button>
      <div className="w-px bg-linear-to-b from-transparent via-[#999] to-transparent" />
      <button aria-label="Render mode" className="relative flex w-[110px] items-center justify-center pr-3">
        <svg viewBox="0 0 36 42" className="h-[42px] w-9" fill="none" stroke="#444"><g strokeWidth="2"><path d="M18 4L33 13v18L18 39 3 31V13zM3 13l15 9 15-9M18 22v17" /></g><g strokeWidth="1" stroke="#666"><path d="M10 8l15 9v18M26 8l-15 9v18M3 22l15 8 15-8" /></g><g fill="#444" stroke="none"><circle cx="18" cy="4" r="3.500" /><circle cx="3.500" cy="13" r="3.500" /><circle cx="32.500" cy="13" r="3.500" /><circle cx="18" cy="22" r="3.500" /><circle cx="3.500" cy="31" r="3.500" /><circle cx="32.500" cy="31" r="3.500" /><circle cx="18" cy="38.500" r="3.500" /></g></svg>
        {corner}
      </button>
      <div className="w-px bg-linear-to-b from-transparent via-[#999] to-transparent" />
    </div>
  );
}

const STEP = {
  first: "M2 9v26M8 22h28M19 10L7 22l12 12",
  prev: "M1 22h32M14 8L1 22l13 14",
  play: "M5 7v30l25-15z",
  next: "M1 22h30M17 9l13 13-13 13",
  last: "M1 22h27M17 10l12 12-12 12M32 9v26",
};

function RightColumn() {
  return (
    <div className="flex shrink-0 items-center self-start">
      <Handle />
      <div className="flex w-[590px] flex-col gap-[11px]">
        <section className={`${CARD} h-[183px] pt-[14px] pl-[33px]`}>
          <h2 className="flex h-[60px] items-center gap-6 text-[32px] font-bold"><Chevron className="h-[14px] w-6 text-[#555]" w={3} />MESH</h2>
          <div className="flex h-[56px] items-start">
            <span className="mt-[18px] ml-[13px] h-[36px] w-[12px] border-b-[3px] border-l-[3px] border-[#a0a0a0]" />
            <svg viewBox="0 0 36 40" className="mt-[30px] ml-[29px] h-10 w-9" aria-hidden="true"><path d="M18 0l18 10-18 10L0 10z" fill="#a2a2a2" /><path d="M0 10l18 10v20L0 30z" fill="#5f5f5f" /><path d="M36 10L18 20v20l18-10z" fill="#878787" /></svg>
            <span className="mt-[29px] ml-[18px] text-[32px] leading-10">region1</span>
          </div>
        </section>
        <section className={`${CARD} h-[295px] pt-[14px] pr-[26px] pl-[30px]`}>
          <h2 className="flex h-[60px] items-center gap-6 pl-[3px] text-[32px] font-bold"><Chevron className="h-[14px] w-6 text-[#555]" w={3} />TIME STEPS</h2>
          <div className="mt-3 flex h-[88px] items-center pr-[5px] pl-[17px]">
            {Object.entries(STEP).map(([k, d]) => (
              <button key={k} aria-label={k} disabled={k === "last"} className="mr-8 disabled:mr-9">
                <svg viewBox="0 0 36 44" className="h-11 w-9" fill="none" stroke={k === "last" ? "#8f8f8f" : B} strokeWidth="2.500"><path d={d} /></svg>
              </button>
            ))}
            <input aria-label="Time step" defaultValue="9" className="h-20 w-[132px] border-b-2 border-[#a0a0a0] pl-[10px] text-[32px]" />
            <span className="ml-auto text-[32px]">s</span>
          </div>
          <input type="range" aria-label="Time" defaultValue="100" className={`${RANGE} w-full`} />
          <div className="mt-[7px] flex justify-between pr-[2px] text-[28px] leading-9 text-[#3c3c3c]"><span>0s</span><span>9s</span></div>
        </section>
      </div>
    </div>
  );
}

/* ---------- Colour legend ---------- */

const SCALE = ["#1410ae", "#1d24b0", "#2a41b0", "#3457b0", "#4069b0", "#4b7cb1", "#548bb1", "#5f9ab1", "#68a9b0", "#6bb08a", "#6bae3e", "#6bae20", "#8aae1f", "#afab1a", "#aa9614", "#a6820d", "#9f6c00", "#9a5200", "#962f00", "#951d00"];

function Legend() {
  return (
    <div className="absolute bottom-5 left-1/2 w-[750px] -translate-x-1/2">
      <div className="flex h-11 items-center pl-[140px]">
        <span className="mt-2 rounded-full bg-[#565656] px-5 text-[24px] leading-10 text-[#b2b2b2]">LIMITED</span>
        <span className="ml-[42px] text-[33px] font-bold text-[#2b2b2b]">Temperature</span>
        <button aria-label="Legend options" className="ml-[10px] flex size-[38px] items-center justify-center rounded-full border-2 border-[#8f8f8f]">
          <svg viewBox="0 0 14 14" className="size-[14px]" stroke="#555862" strokeWidth="2.500" aria-hidden="true"><path d="M0 2h14M0 7h14M0 12h14" /></svg>
        </button>
      </div>
      <svg viewBox="0 0 750 84" className="mt-[25px] block h-[84px] w-full overflow-visible" aria-hidden="true">
        {Array.from({ length: 26 }, (_, i) => (
          <path key={i} d={`M${i * 30} ${i % 5 ? 9 : i === 10 || i === 15 || i === 20 ? 4 : 1}V25`} stroke={i % 5 ? "#808080" : "#505050"} strokeWidth={i === 0 || i === 25 ? 3 : i % 5 ? 4 : 5} />
        ))}
        {SCALE.map((c, i) => <rect key={c} x={i * 37.5} y="24" width="38" height="37" fill={c} />)}
        <path d="M0 63l15 20h-30zM750 63l15 20h-30z" fill="#000" />
      </svg>
    </div>
  );
}

/* ---------- Orientation widget and floating buttons ---------- */

function NavCube() {
  const face = { fill: "none", stroke: "#757575", strokeWidth: 1.5 };
  return (
    <div className="pointer-events-auto absolute right-[42px] bottom-[49px] size-[400px] text-[#444]">
      <svg viewBox="0 0 400 400" className="absolute inset-0 size-full overflow-visible font-['Lato',sans-serif]">
        <g {...face}>
          <path d="M92 127l138-2 4 149-137 3zM230 125l60-4 3 149-59 4M92 127l60-4 138-2" fill="#b0b0b0" />
          <path d="M152 123l4 150M97 277l59-4 137-3" strokeDasharray="7 5" stroke="#929292" />
        </g>
        <text x="163" y="210" fontSize="24" textAnchor="middle" fill="#5a5a5a">TOP</text>
        <text x="262" y="205" fontSize="16" textAnchor="middle" fill="#5a5a5a">BACK</text>
        <path d="M151 277l-3-155" stroke="#8fb77d" strokeWidth="3" /><path d="M148 122l-2-46" stroke="#7db257" strokeWidth="3" /><path d="M145 49l5 29h-9z" fill="#7db257" />
        <path d="M154 281l185-2" stroke="#a35850" strokeWidth="2" /><path d="M367 278l-30 5v-9z" fill="#a35850" />
        <path d="M151 281l-80 3" stroke="#5855b2" strokeWidth="2.500" /><path d="M60 288l12-5 4 2-4 5z" fill="#5855b2" />
        <g fontSize="30" fontWeight="600" textAnchor="middle" className="font-['Open_Sans',sans-serif]">
          <text x="144" y="29" fill="#6cac32">y</text><text x="388" y="286" fill="#a33c2d">X</text><text x="50" y="299" fill="#3b37b2">Z</text>
        </g>
      </svg>
      <button aria-label="Rotate up" className="absolute top-1 left-[186px]"><Chevron className="h-[14px] w-6 rotate-180" w={2.500} /></button>
      <button aria-label="Rotate down" className="absolute top-[380px] left-[186px]"><Chevron className="h-[14px] w-6" w={2.500} /></button>
      <button aria-label="Rotate left" className="absolute top-[192px] left-[-3px]"><Chevron className="h-[14px] w-6 rotate-90" w={2.500} /></button>
      <button aria-label="Rotate right" className="absolute top-[192px] left-[374px]"><Chevron className="h-[14px] w-6 -rotate-90" w={2.500} /></button>
      <button aria-label="Camera" className="absolute top-[63px] left-[41px]">
        <svg viewBox="0 0 34 26" className="h-[26px] w-[34px]" fill="none" stroke="currentColor" strokeWidth="2.500"><rect x="2" y="3" width="21" height="20" rx="4" /><path d="M23 10l9-4v14l-9-4z" /></svg>
      </button>
      <button aria-label="Home view" className="absolute top-[62px] left-[306px]">
        <svg viewBox="0 0 30 28" className="h-7 w-[30px]" fill="none" stroke="currentColor" strokeWidth="2"><path d="M1 14L15 1l14 13M5 12v15h7v-9h6v9h7V12" /></svg>
      </button>
      <button aria-label="Roll left" className="absolute top-[312px] left-[47px]">
        <svg viewBox="0 0 38 36" className="h-9 w-[38px]" fill="none" stroke="#6a6a6a" strokeWidth="2"><path d="M20 2a15.500 15.500 0 1 1-14 21" /><path d="M1 21l2-11 9 7z" fill="#444" stroke="none" /></svg>
      </button>
      <button aria-label="Roll right" className="absolute top-[312px] left-[303px]">
        <svg viewBox="0 0 38 36" className="h-9 w-[38px]" fill="none" stroke="#6a6a6a" strokeWidth="2"><path d="M18 2a15.500 15.500 0 1 0 14 21" /><path d="M37 21l-2-11-9 7z" fill="#444" stroke="none" /></svg>
      </button>
    </div>
  );
}

function Floating() {
  return (
    <>
      <NavCube />
      <button aria-label="Open chat" className="pointer-events-auto absolute right-[50px] bottom-[462px] flex size-[120px] items-center justify-center rounded-full bg-[#2f5178] shadow-[0_4px_60px_rgba(0,0,0,0.18)]">
        <svg viewBox="0 0 54 60" className="h-[60px] w-[54px]" aria-hidden="true"><path d="M6 0h42a6 6 0 0 1 6 6v54l-16-6H6a6 6 0 0 1-6-6V6a6 6 0 0 1 6-6z" fill="#b0b0b0" /><path d="M9 39q18 12 36 0" fill="none" stroke="#2f5178" strokeWidth="3" strokeLinecap="round" /></svg>
      </button>
      <button aria-label="Translate" className="pointer-events-auto absolute right-0 bottom-[746px] flex h-[90px] w-[89px] items-center rounded-l-full border-b-4 border-l-4 border-[#bb7f98] border-l-[#c9a0b3] bg-linear-to-br from-[#cb9db4] to-[#b97a96] pl-[28px] shadow-[-4px_8px_30px_rgba(0,0,0,0.12)]">
        <svg viewBox="0 0 42 42" className="h-[42px] w-[42px]" fill="none" stroke="#d6d4d6" strokeWidth="4" aria-hidden="true"><path d="M2 6h18v11H2zM11 1v25M25 5h8q5 0 5 5v5M4 28v4q0 6 6 6h7M22 41l9-20 9 20M25 34h12" /></svg>
      </button>
      <div className="absolute top-[261px] right-0 flex size-[61px] items-center justify-center rounded-full bg-[#5677b0] font-['Roboto',sans-serif] text-[22px] font-bold text-[#b2b2b2] shadow-[0_4px_30px_rgba(60,60,120,0.2)]">624M</div>
    </>
  );
}

export default function App() {
  return (
    <div className="flex h-screen flex-col bg-[#393939] px-[3px] pt-[9px] pb-2 font-['Lato',sans-serif] text-[#232323]">
      <div className="flex min-h-0 flex-1 flex-col overflow-hidden rounded-[20px] bg-[#b2b2b2]">
        <Header />
        <Toolbar />
        <main className="relative min-h-0 flex-1 bg-[#adadad]">
          <Mesh />
          <Legend />
          <div className="relative flex h-full p-5">
            <div className="flex w-[615px] shrink-0 flex-col gap-[11px]">
              <Tree />
              <section className={`${CARD} flex h-[90px] shrink-0 items-center pb-[2px] pl-[25px]`}><h2 className="text-[36px] font-bold">Job status</h2></section>
            </div>
            <Handle />
            <FiltersPanel />
            <div className="flex min-w-0 flex-1 items-start justify-center pl-5"><ViewButtons /></div>
            <RightColumn />
          </div>
          <Floating />
        </main>
      </div>
    </div>
  );
}
